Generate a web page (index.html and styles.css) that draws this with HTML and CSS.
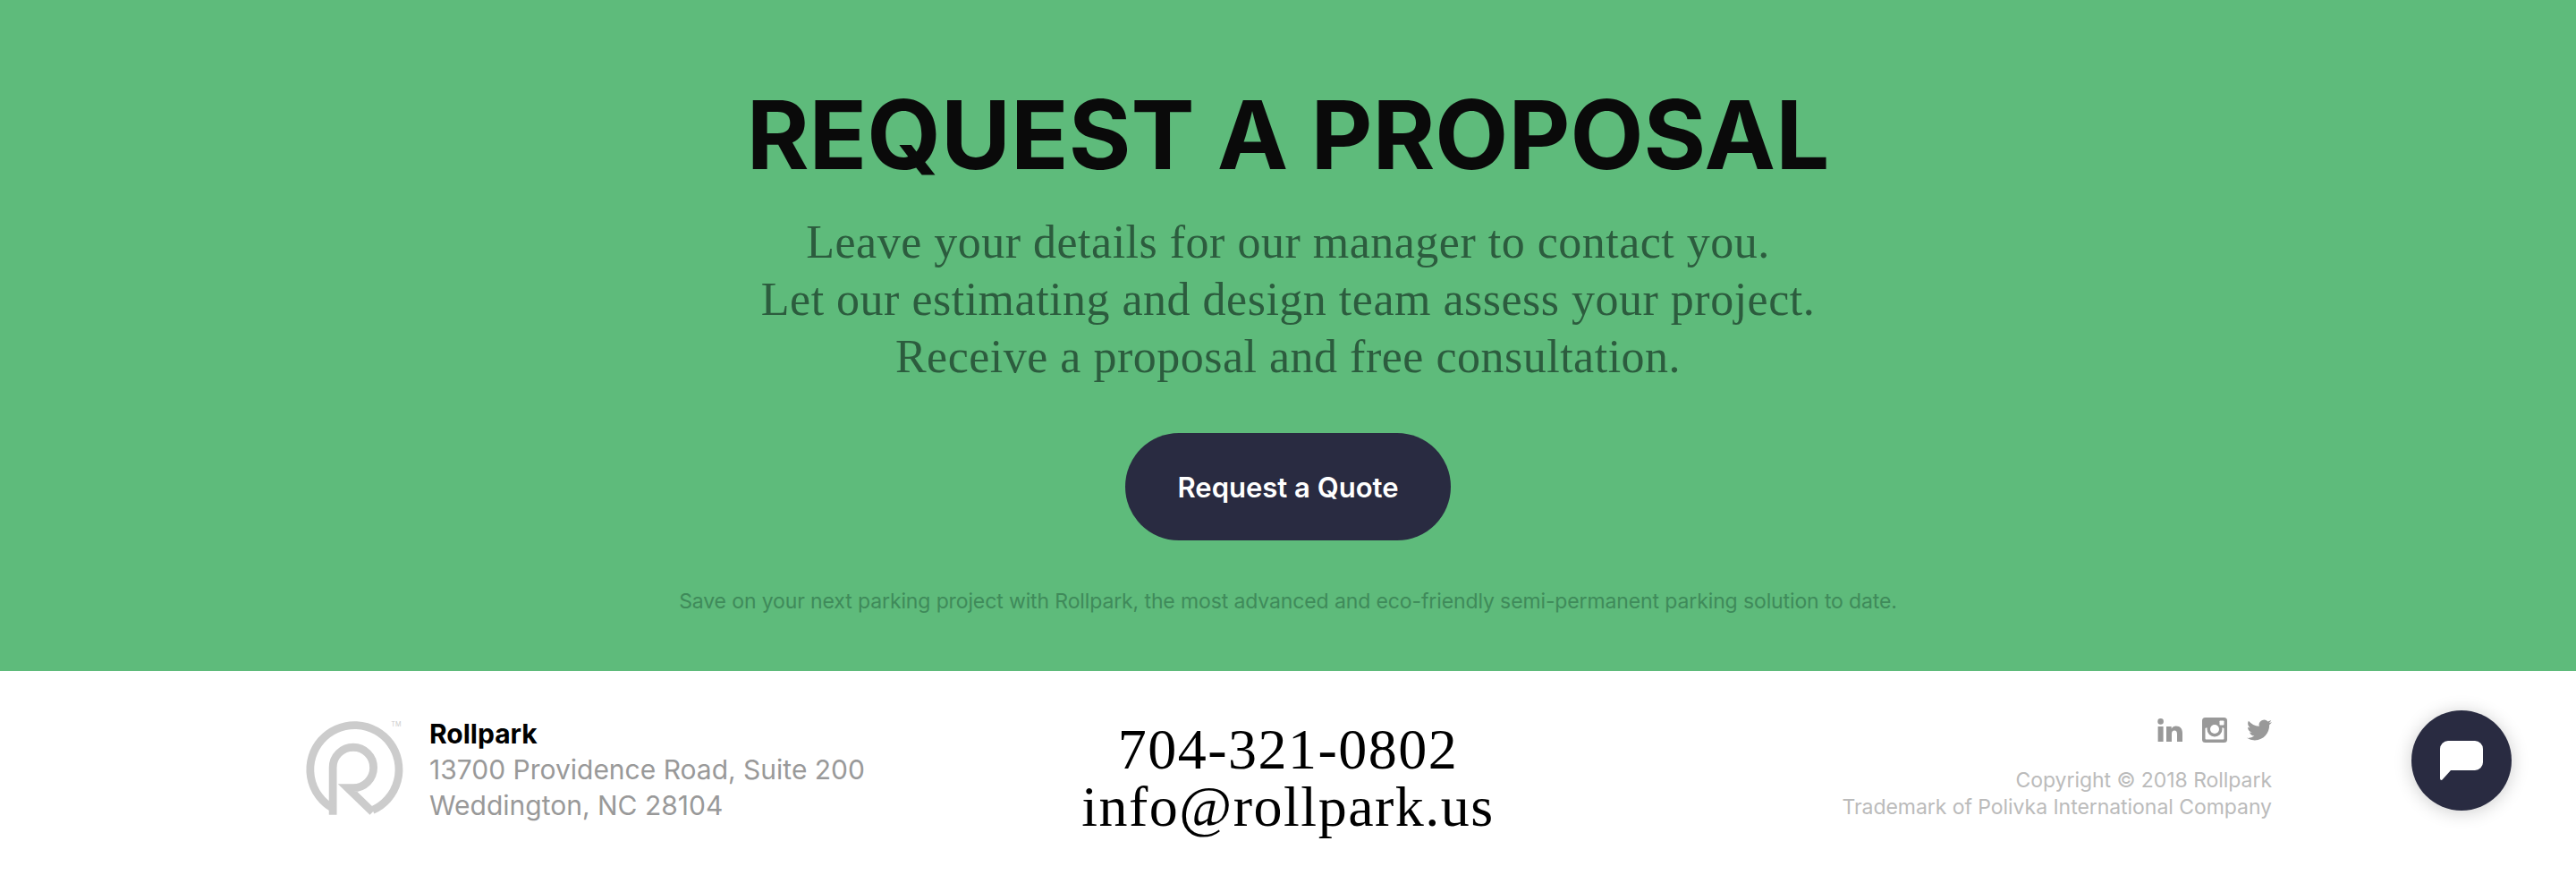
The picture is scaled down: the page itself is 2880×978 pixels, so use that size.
FILE: index.html
```html
<!DOCTYPE html>
<html lang="en">
<head>
  <meta charset="UTF-8">
  <meta name="viewport" content="width=device-width, initial-scale=1.0">
  <title>Rollpark - Request a Proposal</title>
  <link rel="stylesheet" href="styles.css">
</head>
<body>
  <section class="proposal">
    <h1>REQUEST A PROPOSAL</h1>
    <p class="lead">Leave your details for our manager to contact you.<br>Let our estimating and design team assess your project.<br>Receive a proposal and free consultation.</p>
    <a class="quote-btn" href="#">Request a Quote</a>
    <p class="note">Save on your next parking project with Rollpark, the most advanced and eco-friendly semi-permanent parking solution to date.</p>
  </section>

  <footer>
    <div class="footer-inner">
      <div class="brand">
        <svg class="logo" width="124" height="114" viewBox="10 8 120 110">
          <path d="M44 113V62A22 22 0 1 1 66 84H60L87 110" fill="none" stroke="#ccc" stroke-width="8.5"/>
          <path d="M87 108A48 48 0 1 0 44 106" fill="none" stroke="#ccc" stroke-width="8.5"/>
          <text x="107" y="18" class="tm">TM</text>
        </svg>
        <div class="address">
          <strong>Rollpark</strong><br>
          13700 Providence Road, Suite 200<br>
          Weddington, NC 28104
        </div>
      </div>

      <div class="contact">704-321-0802<br>info@rollpark.us</div>

      <div class="legal">
        <div class="social">
          <svg width="28" height="26" viewBox="0 0 28 26"><circle cx="3.6" cy="3.4" r="3.3" fill="#999"/><rect x="0.6" y="9" width="6" height="17" fill="#999"/><path d="M10 9h5.7v2.4c1-1.7 2.9-2.8 5-2.8 5 0 7.3 3 7.3 8V26h-6v-8.500c0-2.500-.9-4-2.900-4-2.200 0-3.100 1.600-3.100 4V26h-6z" fill="#999"/></svg>
          <svg width="28" height="28" viewBox="0 0 28 28"><rect width="28" height="28" rx="3.500" fill="#999"/><rect x="3.500" y="11.500" width="21" height="13" rx="1" fill="#fff"/><circle cx="14" cy="13" r="8.500" fill="#999"/><circle cx="14" cy="13" r="5" fill="#fff"/><rect x="19.500" y="3.500" width="5" height="5" rx="0.800" fill="#fff"/></svg>
          <svg width="28" height="28" viewBox="0 0 24 24"><path d="M23.953 4.57a10 10 0 01-2.825.775 4.958 4.958 0 002.163-2.723c-.951.555-2.005.959-3.127 1.184a4.92 4.92 0 00-8.384 4.482C7.69 8.095 4.067 6.13 1.64 3.162a4.822 4.822 0 00-.666 2.475c0 1.71.87 3.213 2.188 4.096a4.904 4.904 0 01-2.228-.616v.06a4.923 4.923 0 003.946 4.827 4.996 4.996 0 01-2.212.085 4.936 4.936 0 004.604 3.417 9.867 9.867 0 01-6.102 2.105c-.39 0-.779-.023-1.17-.067a13.995 13.995 0 007.557 2.209c9.053 0 13.998-7.496 13.998-13.985 0-.21 0-.42-.015-.63A9.935 9.935 0 0024 4.59z" fill="#999"/></svg>
        </div>
        <div class="copyright">Copyright © 2018 Rollpark<br>Trademark of Polivka International Company</div>
      </div>
    </div>
  </footer>

  <a class="chat" href="#">
    <svg width="48" height="44" viewBox="0 0 48 44"><path d="M9 0H39A9 9 0 0 1 48 9V24A9 9 0 0 1 39 33H12L2.500 43.500C1.500 44.500 0 44 0 42V9A9 9 0 0 1 9 0Z" fill="#fff"/></svg>
  </a>
</body>
</html>
```

FILE: styles.css
```css
* {
  box-sizing: border-box;
}

html,
body {
  height: 100%;
}

body {
  margin: 0;
  font-family: 'Inter', sans-serif;
  background-color: #fff;
  overflow: hidden;
}

.proposal {
  height: 750px;
  padding-top: 85px;
  background-color: #5ebb7b;
  text-align: center;
}

h1 {
  margin: 0;
  font-size: 106.5px;
  line-height: 132px;
  font-weight: 700;
  color: #0a0a0a;
}

.lead {
  margin: 22px 0 0;
  font-family: 'Liberation Serif', serif;
  font-size: 52px;
  line-height: 64px;
  letter-spacing: 0.5px;
  color: #2c5c3e;
}

.quote-btn {
  display: flex;
  align-items: center;
  justify-content: center;
  width: 364px;
  height: 120px;
  margin: 53px auto 0;
  border-radius: 60px;
  background-color: #292b41;
  color: #fff;
  font-size: 31px;
  font-weight: 600;
  text-decoration: none;
}

.note {
  margin: 51px 0 0;
  font-size: 23px;
  line-height: 34px;
  letter-spacing: -0.12px;
  color: #3f8a5a;
}

footer {
  height: 228px;
}

.footer-inner {
  display: grid;
  grid-template-columns: 1fr auto 1fr;
  width: 2200px;
  margin: 0 auto;
  padding-top: 50px;
}

.brand {
  display: flex;
  gap: 19px;
}

.logo {
  flex: none;
  margin-top: 2px;
  margin-left: -3px;
}

.tm {
  font-size: 7px;
  fill: #ccc;
}

.address {
  font-size: 30px;
  line-height: 40px;
  color: #999;
}

.address strong {
  color: #000;
  font-weight: 700;
}

.contact {
  font-family: 'Liberation Serif', serif;
  font-size: 64px;
  line-height: 64px;
  letter-spacing: 1.5px;
  text-align: center;
  color: #000;
  padding-top: 6px;
}

.legal {
  text-align: right;
}

.social {
  display: flex;
  justify-content: flex-end;
  align-items: center;
  gap: 22px;
  margin-top: 2px;
}

.copyright {
  margin-top: 27px;
  font-size: 23px;
  line-height: 30px;
  letter-spacing: -0.05px;
  color: #bbb;
}

.chat {
  position: fixed;
  left: 2696px;
  top: 794px;
  display: flex;
  align-items: center;
  justify-content: center;
  width: 112px;
  height: 112px;
  border-radius: 50%;
  background-color: #292b41;
  box-shadow: 0 2px 20px rgba(0, 0, 0, 0.2);
}
```
